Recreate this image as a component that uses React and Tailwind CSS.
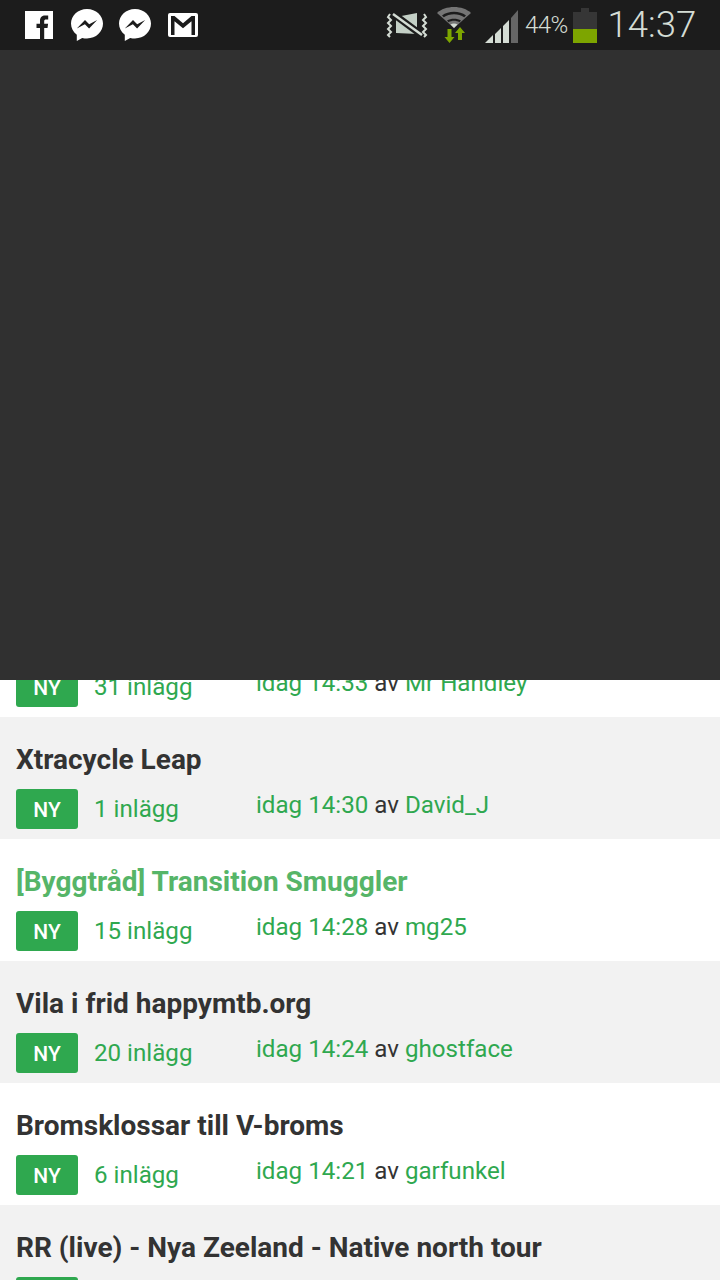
const GREEN = 'text-[#2fa84f]';

const topics = [
  { title: 'Xtracycle Leap', count: '1 inlägg', time: 'idag 14:30', user: 'David_J', shade: true },
  { title: '[Byggtråd] Transition Smuggler', count: '15 inlägg', time: 'idag 14:28', user: 'mg25', visited: true },
  { title: 'Vila i frid happymtb.org', count: '20 inlägg', time: 'idag 14:24', user: 'ghostface', shade: true },
  { title: 'Bromsklossar till V-broms', count: '6 inlägg', time: 'idag 14:21', user: 'garfunkel' },
  { title: 'RR (live) - Nya Zeeland - Native north tour', shade: true },
];

const FacebookIcon = () => (
  <svg width="30" height="30" viewBox="0 0 30 30" className="shrink-0">
    <path fill="#fff" d="M1 1h28v28H1z" />
    <path fill="#1c1c1c" d="M16 29V18h-3.500v-4.200H16v-3c0-3.600 2.200-5.300 5-5.300h3.200v4H22c-1.300 0-1.800.6-1.800 1.800v2.500h3.900l-.6 4.200h-3.300v11z" />
  </svg>
);

const MessengerIcon = () => (
  <svg width="34" height="34" viewBox="0 0 34 34" className="shrink-0">
    <path fill="#fff" d="M17 1C8 1 1 7.600 1 15.600c0 4.500 2.200 8.500 5.800 11.100V33l5.400-3.100c1.500.4 3.100.6 4.800.6 9 0 16-6.600 16-14.900C33 7.600 26 1 17 1z" />
    <path fill="#1c1c1c" d="M6.800 20.400 15 12l4.200 4.300L27.200 12l-8.100 8.600-4.200-4.300z" />
  </svg>
);

const GmailIcon = () => (
  <svg width="30" height="24" viewBox="0 0 30 24" className="shrink-0">
    <rect width="30" height="24" rx="2" fill="#fff" />
    <path fill="#1c1c1c" d="M3 22V3h3.500L15 10.200 23.500 3H27v19h-3.500V8.200L15 15.200 6.500 8.200V22z" />
  </svg>
);

const MuteIcon = () => (
  <svg width="42" height="28" viewBox="0 0 42 28" className="shrink-0">
    <path fill="#c4d0c6" d="M10 6 31 2v21L10 22z" />
    <path stroke="#1c1c1c" strokeWidth="7" d="M6 2l31 23" />
    <path stroke="#d4dcd4" strokeWidth="2.500" d="M7 3l29 21" />
    <path fill="none" stroke="#d4dcd4" strokeWidth="2" d="M4 3 2 6l3 3-3 3 3 3-3 3 3 3-3 3 2 2M38 3l2 3-3 3 3 3-3 3 3 3-3 3 3 3-2 2" />
  </svg>
);

const WifiIcon = () => (
  <svg width="36" height="38" viewBox="0 0 36 38" className="shrink-0">
    <path fill="#757575" d="M18 22 1 7C9-1 27-1 35 7z" />
    <path fill="#1c1c1c" d="M6 9.500c6.500-5 17.500-5 24 0l-1.800 1.800c-5.500-4-14.900-4-20.400 0zM11 14.500c3.800-2.500 10.200-2.500 14 0l-1.600 1.800c-3-2-7.800-2-10.800 0z" />
    <path fill="#d4dcd4" d="M18 22l-3.500-3.500c2-1.200 5-1.200 7 0z" />
    <path fill="#7da500" d="M11.500 23h4v8h3l-5 6-5-6h3zM22 34V27h-3l5-6 5 6h-3v7z" />
  </svg>
);

const SignalIcon = () => (
  <svg width="34" height="34" viewBox="0 0 34 34" className="shrink-0">
    <path fill="#d4dcd4" d="M0 33l8-8v8zM10 33V24l6-6v15zM18 33V16l6-6v23z" />
    <path fill="#666" d="M26 33V8l7-8v33z" />
  </svg>
);

const BatteryIcon = () => (
  <div className="flex flex-col items-center w-6 shrink-0 mt-px">
    <div className="w-2 h-1 bg-[#363636]" />
    <div className="w-6 h-[17px] bg-[#363636]" />
    <div className="w-6 h-3.5 bg-[#7da500]" />
  </div>
);

const TopicMeta = ({ count, time, user }) => (
  <div className="flex h-10 shrink-0 pl-4 text-[24.15px] leading-7">
    <div className="w-[62px] h-10 pt-0.5 bg-[#2fa84f] rounded-[3px] text-white text-[21px] font-medium flex items-center justify-center">NY</div>
    {count && <div className={`w-[178px] pl-4 pt-1.5 ${GREEN}`}>{count}</div>}
    {time && (
      <div className="text-[#333] pt-0.5">
        <span className={GREEN}>{time}</span> av <span className={GREEN}>{user}</span>
      </div>
    )}
  </div>
);

// the row that is half hidden behind the dark panel
const ClippedRow = () => (
  <div className="h-[37px] overflow-hidden flex flex-col justify-end bg-white">
    <TopicMeta count="31 inlägg" time="idag 14:33" user="Mr Handley" />
    <div className="h-2.5 shrink-0" />
  </div>
);

const TopicRow = ({ title, count, time, user, shade, visited }) => (
  <div className={`h-[122px] overflow-hidden flex flex-col shrink-0 ${shade ? 'bg-[#f2f2f2]' : 'bg-white'}`}>
    <div className={`h-[72px] shrink-0 pl-4 pt-[25px] text-[28px] leading-9 font-bold ${visited ? 'text-[#56b568]' : 'text-[#333]'}`}>
      {title}
    </div>
    <TopicMeta count={count} time={time} user={user} />
  </div>
);

export default function App() {
  return (
    <div className="w-[720px] h-[1280px] overflow-hidden bg-white font-['Roboto',sans-serif]">
      <div className="h-[50px] bg-[#1c1c1c] flex items-center pl-6">
        <FacebookIcon />
        <div className="ml-[16px]"><MessengerIcon /></div>
        <div className="ml-[14px]"><MessengerIcon /></div>
        <div className="ml-[16px]"><GmailIcon /></div>
        <div className="ml-[188px]"><MuteIcon /></div>
        <div className="ml-[8px]"><WifiIcon /></div>
        <div className="ml-[13px] mt-[4px]"><SignalIcon /></div>
        <div className="ml-[6px] text-2xl font-light text-[#d4dcd4] tracking-tight">44%</div>
        <div className="ml-[5px]"><BatteryIcon /></div>
        <div className="ml-[11px] text-[36.5px] font-light text-[#d4dcd4]">14:37</div>
      </div>
      <div className="h-[630px] bg-[#303030]" />
      <ClippedRow />
      {topics.map((t) => (
        <TopicRow key={t.title} {...t} />
      ))}
    </div>
  );
}
